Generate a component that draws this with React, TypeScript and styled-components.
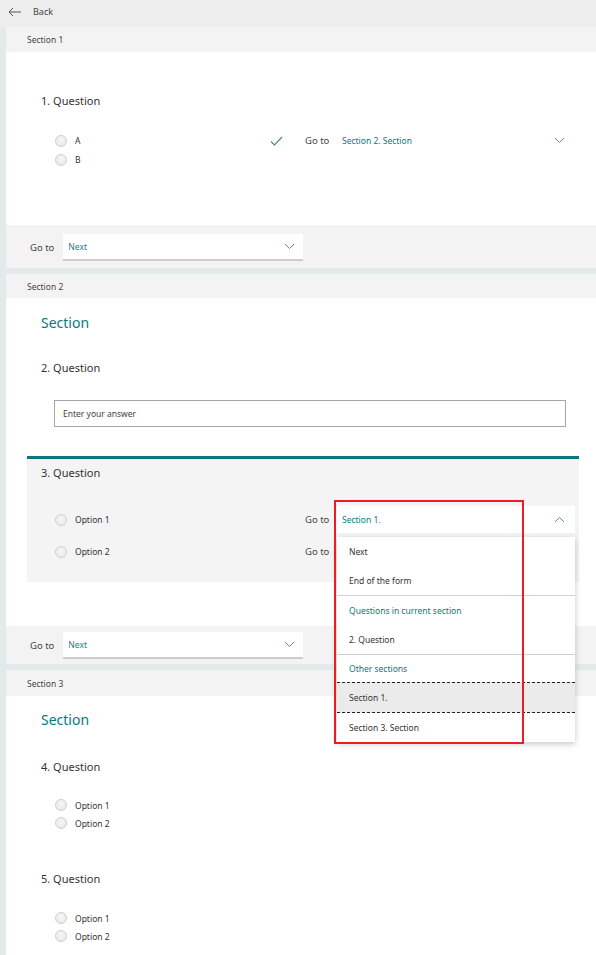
import React from "react";
import styled, { createGlobalStyle } from "styled-components";

const GlobalStyle = createGlobalStyle`
  html, body { margin: 0; padding: 0; }
  body {
    background: #e3eaec;
    font-family: "Noto Sans", "Open Sans", sans-serif;
    color: #333;
    width: 596px;
    height: 955px;
    overflow: hidden;
  }
  * { box-sizing: border-box; }
`;

const TEAL = "#077a7e";

const Page = styled.div`
  display: flex;
  flex-direction: column;
  width: 596px;
  height: 955px;
  overflow: hidden;
`;

const TopBar = styled.div`
  height: 27px;
  flex: none;
  background: #ededed;
  display: flex;
  align-items: center;
  gap: 12px;
  padding: 0 0 4px 8px;
  font-size: 9px;
  color: #444;
`;

const Sections = styled.div`
  margin-left: 6px;
  display: flex;
  flex-direction: column;
  gap: 6px;
`;

const Card = styled.div`
  display: flex;
  flex-direction: column;
  background: #fff;
`;

const SectionHeader = styled.div<{ $h: number }>`
  height: ${(p) => p.$h}px;
  background: #f3f3f3;
  display: flex;
  align-items: center;
  padding-left: 21px;
  font-size: 8.5px;
  color: #444;
`;

const SectionBody = styled.div<{ $pt: number; $pb: number }>`
  padding: ${(p) => p.$pt}px 17px ${(p) => p.$pb}px 21px;
  display: flex;
  flex-direction: column;
  background: #fff;
`;

const SectionTitle = styled.div`
  font-size: 14px;
  line-height: 20px;
  color: ${TEAL};
  padding-left: 14px;
`;

const Question = styled.div<{ $mt: number; $active?: boolean }>`
  margin-top: ${(p) => p.$mt}px;
  display: flex;
  flex-direction: column;
  padding: ${(p) => (p.$active ? "6px 0 17px 14px" : "0 0 0 14px")};
  background: ${(p) => (p.$active ? "#f4f4f4" : "transparent")};
  border-top: ${(p) => (p.$active ? `3px solid ${TEAL}` : "none")};
`;

const QTitle = styled.div`
  font-size: 11px;
  line-height: 16px;
  color: #333;
`;

const Options = styled.div<{ $mt: number; $gap?: number }>`
  margin-top: ${(p) => p.$mt}px;
  display: flex;
  flex-direction: column;
  gap: ${(p) => p.$gap ?? 0}px;
`;

const OptionRow = styled.div<{ $h: number }>`
  height: ${(p) => p.$h}px;
  display: grid;
  grid-template-columns: 215px 20px 47px 238px;
  align-items: center;
  padding-left: 14px;
`;

const RadioLabel = styled.label`
  display: flex;
  align-items: center;
  gap: 8px;
  font-size: 8.5px;
  color: #333;
`;

const Radio = styled.span`
  width: 12px;
  height: 12px;
  border-radius: 50%;
  border: 1px solid #cfcfcf;
  background: radial-gradient(circle at 50% 40%, #f7f7f7, #e6e6e6);
  flex: none;
`;

const CheckCell = styled.span`
  display: flex;
  align-items: center;
`;

const GoToLabel = styled.span`
  font-size: 9.5px;
  color: #444;
  padding-left: 15px;
`;

const SelectWrap = styled.div`
  position: relative;
  height: 100%;
  display: flex;
  align-items: center;
`;

const SelectBox = styled.div<{ $boxed?: boolean }>`
  width: 100%;
  height: ${(p) => (p.$boxed ? "27px" : "100%")};
  background: ${(p) => (p.$boxed ? "#fff" : "transparent")};
  display: flex;
  align-items: center;
  justify-content: space-between;
  padding: 0 10px 0 5px;
  font-size: 8.5px;
  color: ${TEAL};
`;

const Menu = styled.div`
  position: absolute;
  top: 31px;
  left: 0;
  width: 238px;
  background: #fff;
  box-shadow: 0 2px 6px rgba(0, 0, 0, 0.22);
  display: flex;
  flex-direction: column;
  z-index: 5;
`;

const MenuItem = styled.div<{ $header?: boolean; $selected?: boolean; $h?: number }>`
  height: ${(p) => p.$h ?? 29}px;
  display: flex;
  align-items: center;
  padding-left: 12px;
  font-size: 8.5px;
  color: ${(p) => (p.$header ? TEAL : "#333")};
  background: ${(p) => (p.$selected ? "#ebebeb" : "#fff")};
  border-top: ${(p) => (p.$selected ? "1px dashed #222" : "none")};
  border-bottom: ${(p) => (p.$selected ? "1px dashed #222" : "none")};
`;

const MenuSep = styled.div`
  height: 1px;
  background: #d0d0d0;
`;

const Annotation = styled.div`
  position: absolute;
  left: -3px;
  top: -6px;
  width: 190px;
  height: 244px;
  border: 2px solid #ec1c24;
  pointer-events: none;
  z-index: 6;
`;

const AnswerInput = styled.div`
  margin: 24px 13px 0 27px;
  height: 27px;
  border: 1px solid #a6a6a6;
  display: flex;
  align-items: center;
  padding-left: 8px;
  font-size: 8.5px;
  color: #444;
`;

const Footer = styled.div<{ $pt: number; $pb: number }>`
  background: #f3f3f3;
  padding: ${(p) => p.$pt}px 0 ${(p) => p.$pb}px 24px;
  display: flex;
  align-items: center;
  gap: 9px;
  font-size: 9.5px;
  color: #444;
`;

const FooterSelect = styled.div`
  width: 240px;
  height: 27px;
  background: #fff;
  border-bottom: 2px solid #cdcdcd;
  display: flex;
  align-items: center;
  justify-content: space-between;
  padding: 0 8px 0 5px;
  font-size: 8.5px;
  color: #2d7b80;
`;

const Chevron = ({ up }: { up?: boolean }) => (
  <svg width="11" height="7" viewBox="0 0 11 7">
    <polyline
      points={up ? "1,6 5.5,1.5 10,6" : "1,1 5.5,5.5 10,1"}
      fill="none"
      stroke="#5d8f94"
      strokeWidth="1"
    />
  </svg>
);

const Check = () => (
  <svg width="13" height="10" viewBox="0 0 13 10">
    <polyline points="1,5.5 4.5,9 12,1" fill="none" stroke="#3c8a8e" strokeWidth="1.1" />
  </svg>
);

const BackArrow = () => (
  <svg width="13" height="10" viewBox="0 0 13 10">
    <polyline points="5,1 1,5 5,9" fill="none" stroke="#555" strokeWidth="1" />
    <line x1="1" y1="5" x2="13" y2="5" stroke="#555" strokeWidth="1" />
  </svg>
);

type Opt = { label: string; goto?: string; check?: boolean; boxed?: boolean; open?: boolean };

const OptionLine = ({ o, h }: { o: Opt; h: number }) => (
  <OptionRow $h={h}>
    <RadioLabel>
      <Radio />
      {o.label}
    </RadioLabel>
    <CheckCell>{o.check && <Check />}</CheckCell>
    {o.goto !== undefined ? <GoToLabel>Go to</GoToLabel> : <span />}
    {o.goto !== undefined ? (
      <SelectWrap>
        <SelectBox $boxed={o.boxed}>
          <span>{o.goto}</span>
          <Chevron up={o.open} />
        </SelectBox>
        {o.open && (
          <>
            <Menu>
              <MenuItem>Next</MenuItem>
              <MenuItem>End of the form</MenuItem>
              <MenuSep />
              <MenuItem $header>Questions in current section</MenuItem>
              <MenuItem>2. Question</MenuItem>
              <MenuSep />
              <MenuItem $header $h={27}>Other sections</MenuItem>
              <MenuItem $selected $h={31}>Section 1.</MenuItem>
              <MenuItem>Section 3. Section</MenuItem>
            </Menu>
            <Annotation />
          </>
        )}
      </SelectWrap>
    ) : (
      <span />
    )}
  </OptionRow>
);

const FooterGoTo = ({ pt, pb }: { pt: number; pb: number }) => (
  <Footer $pt={pt} $pb={pb}>
    <span>Go to</span>
    <FooterSelect>
      <span>Next</span>
      <Chevron />
    </FooterSelect>
  </Footer>
);

export default function App() {
  return (
    <Page>
      <GlobalStyle />
      <TopBar>
        <BackArrow />
        <span>Back</span>
      </TopBar>
      <Sections>
        <Card>
          <SectionHeader $h={25}>Section 1</SectionHeader>
          <SectionBody $pt={41} $pb={56}>
            <Question $mt={0}>
              <QTitle>1. Question</QTitle>
              <Options $mt={22}>
                <OptionLine h={19} o={{ label: "A", goto: "Section 2. Section", check: true }} />
                <OptionLine h={19} o={{ label: "B" }} />
              </Options>
            </Question>
          </SectionBody>
          <FooterGoTo pt={9} pb={7} />
        </Card>

        <Card>
          <SectionHeader $h={24}>Section 2</SectionHeader>
          <SectionBody $pt={15} $pb={44}>
            <SectionTitle>Section</SectionTitle>
            <Question $mt={27}>
              <QTitle>2. Question</QTitle>
            </Question>
            <AnswerInput>Enter your answer</AnswerInput>
            <Question $mt={29} $active>
              <QTitle>3. Question</QTitle>
              <Options $mt={25} $gap={5}>
                <OptionLine h={27} o={{ label: "Option 1", goto: "Section 1.", boxed: true, open: true }} />
                <OptionLine h={27} o={{ label: "Option 2", goto: "", boxed: true }} />
              </Options>
            </Question>
          </SectionBody>
          <FooterGoTo pt={6} pb={5} />
        </Card>

        <Card>
          <SectionHeader $h={26}>Section 3</SectionHeader>
          <SectionBody $pt={14} $pb={20}>
            <SectionTitle>Section</SectionTitle>
            <Question $mt={29}>
              <QTitle>4. Question</QTitle>
              <Options $mt={21}>
                <OptionLine h={18} o={{ label: "Option 1" }} />
                <OptionLine h={18} o={{ label: "Option 2" }} />
              </Options>
            </Question>
            <Question $mt={39}>
              <QTitle>5. Question</QTitle>
              <Options $mt={22}>
                <OptionLine h={18} o={{ label: "Option 1" }} />
                <OptionLine h={18} o={{ label: "Option 2" }} />
              </Options>
            </Question>
          </SectionBody>
        </Card>
      </Sections>
    </Page>
  );
}
